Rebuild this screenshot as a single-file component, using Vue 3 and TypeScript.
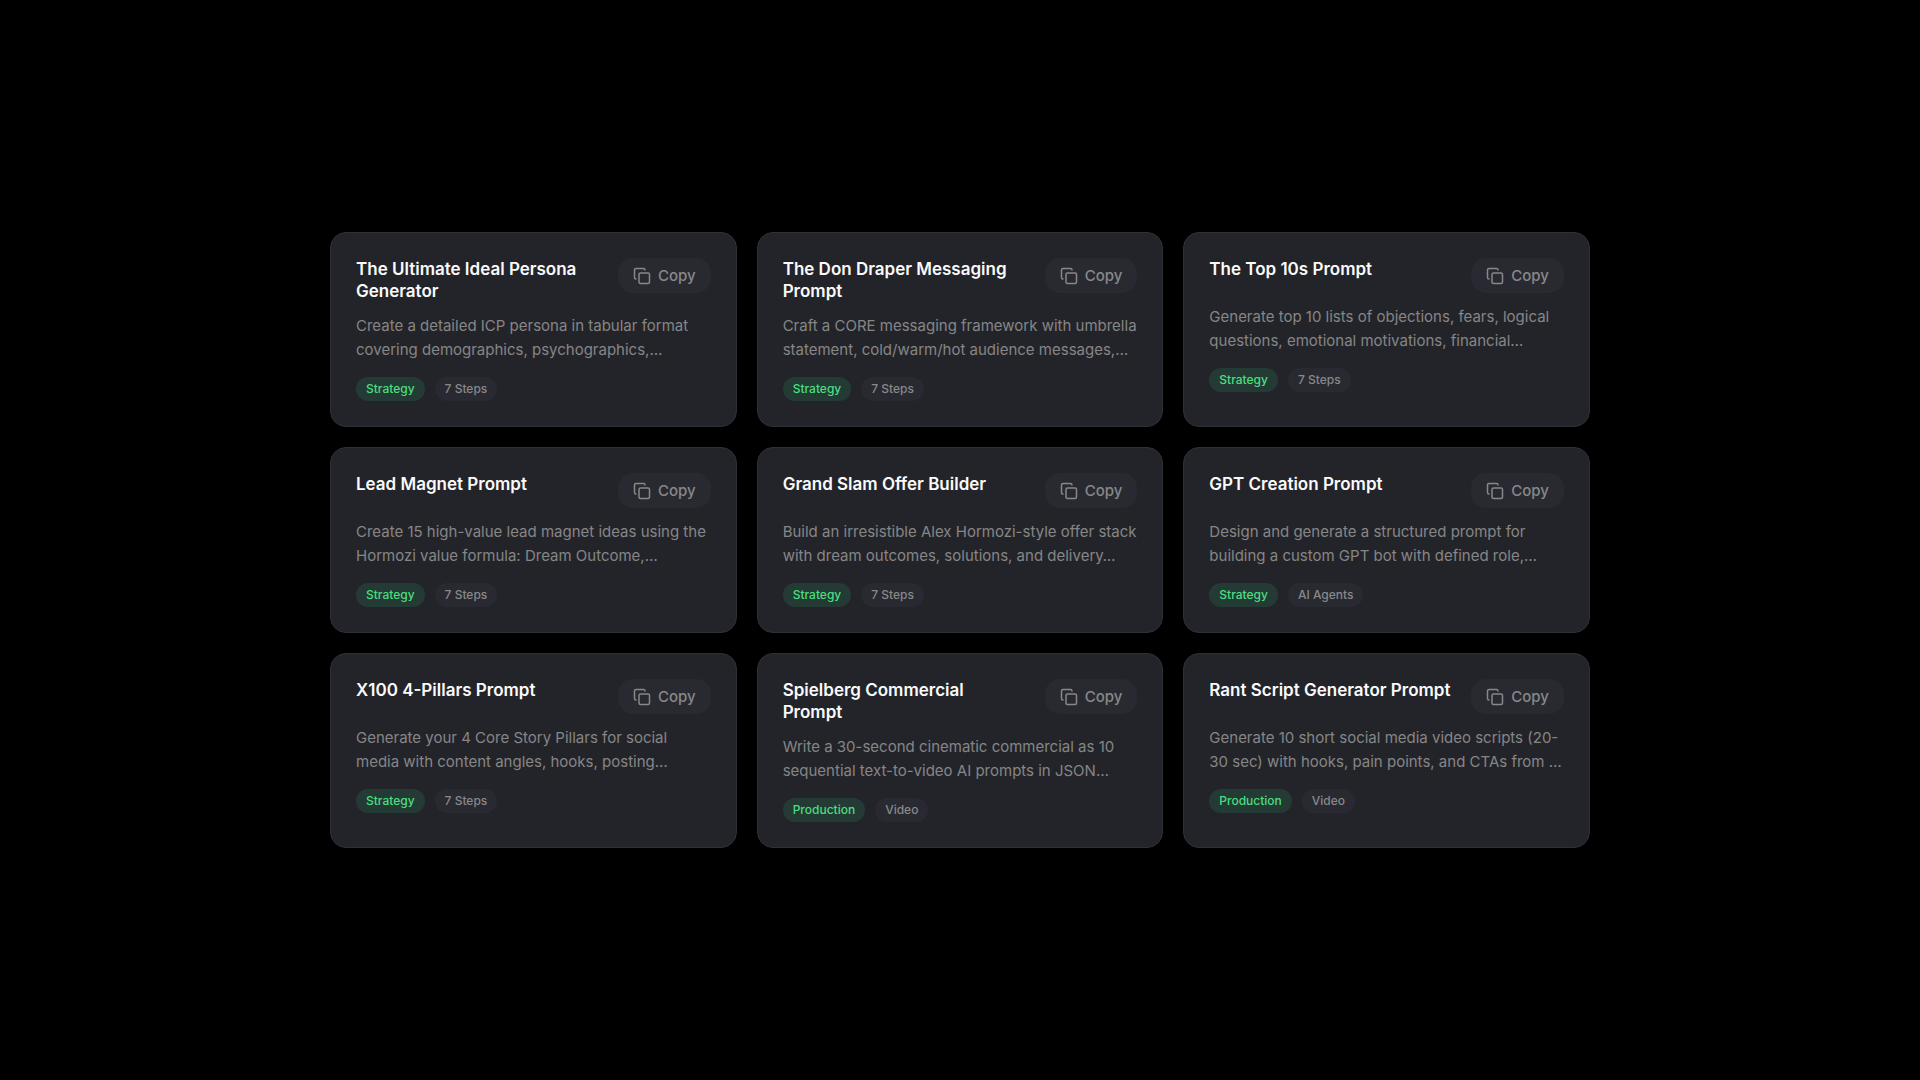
<script setup lang="ts">
interface Prompt {
  title: string
  description: string
  category: string
  tag: string
}

const prompts: Prompt[] = [
  {
    title: 'The Ultimate Ideal Persona Generator',
    description: 'Create a detailed ICP persona in tabular format covering demographics, psychographics,…',
    category: 'Strategy',
    tag: '7 Steps',
  },
  {
    title: 'The Don Draper Messaging Prompt',
    description: 'Craft a CORE messaging framework with umbrella statement, cold/warm/hot audience messages,…',
    category: 'Strategy',
    tag: '7 Steps',
  },
  {
    title: 'The Top 10s Prompt',
    description: 'Generate top 10 lists of objections, fears, logical questions, emotional motivations, financial…',
    category: 'Strategy',
    tag: '7 Steps',
  },
  {
    title: 'Lead Magnet Prompt',
    description: 'Create 15 high-value lead magnet ideas using the Hormozi value formula: Dream Outcome,…',
    category: 'Strategy',
    tag: '7 Steps',
  },
  {
    title: 'Grand Slam Offer Builder',
    description: 'Build an irresistible Alex Hormozi-style offer stack with dream outcomes, solutions, and delivery…',
    category: 'Strategy',
    tag: '7 Steps',
  },
  {
    title: 'GPT Creation Prompt',
    description: 'Design and generate a structured prompt for building a custom GPT bot with defined role,…',
    category: 'Strategy',
    tag: 'AI Agents',
  },
  {
    title: 'X100 4-Pillars Prompt',
    description: 'Generate your 4 Core Story Pillars for social media with content angles, hooks, posting…',
    category: 'Strategy',
    tag: '7 Steps',
  },
  {
    title: 'Spielberg Commercial Prompt',
    description: 'Write a 30-second cinematic commercial as 10 sequential text-to-video AI prompts in JSON…',
    category: 'Production',
    tag: 'Video',
  },
  {
    title: 'Rant Script Generator Prompt',
    description: 'Generate 10 short social media video scripts (20-30 sec) with hooks, pain points, and CTAs from …',
    category: 'Production',
    tag: 'Video',
  },
]

function copyPrompt(prompt: Prompt) {
  navigator.clipboard?.writeText(prompt.description)
}
</script>

<template>
  <main class="page">
    <div class="grid">
      <article v-for="prompt in prompts" :key="prompt.title" class="card">
        <header class="card-header">
          <h2 class="title">{{ prompt.title }}</h2>
          <button class="copy" type="button" @click="copyPrompt(prompt)">
            <svg class="copy-icon" viewBox="0 0 24 24" aria-hidden="true">
              <rect x="8" y="8" width="14" height="14" rx="2" />
              <path d="M4 16c-1.1 0-2-.9-2-2V4c0-1.1.9-2 2-2h10c1.1 0 2 .9 2 2" />
            </svg>
            Copy
          </button>
        </header>
        <p class="description">{{ prompt.description }}</p>
        <div class="tags">
          <span class="tag tag-category">{{ prompt.category }}</span>
          <span class="tag">{{ prompt.tag }}</span>
        </div>
      </article>
    </div>
  </main>
</template>

<style>
body {
  margin: 0;
  background: #000;
}
</style>

<style scoped>
.page {
  display: flex;
  align-items: center;
  justify-content: center;
  min-height: 100vh;
  font-family: Inter, 'Liberation Sans', sans-serif;
}

.grid {
  display: grid;
  grid-template-columns: repeat(3, minmax(0, 1fr));
  gap: 20px;
  width: 100%;
  max-width: 1260px;
}

.card {
  box-sizing: border-box;
  padding: 25px;
  border: 1px solid #303138;
  border-radius: 16px;
  background: #23242a;
}

.card-header {
  display: flex;
  align-items: flex-start;
  justify-content: space-between;
  gap: 19px;
  margin-bottom: 12px;
}

.title {
  margin: 0;
  color: #fafafa;
  font-size: 17px;
  font-weight: 600;
  line-height: 22px;
}

.copy {
  display: flex;
  flex-shrink: 0;
  align-items: center;
  gap: 7px;
  height: 35px;
  padding: 0 15px;
  border: 0;
  border-radius: 15px;
  background: #292a31;
  color: #888;
  font-family: inherit;
  font-size: 15px;
  font-weight: 500;
  cursor: pointer;
}

.copy-icon {
  width: 18px;
  height: 18px;
  fill: none;
  stroke: currentColor;
  stroke-width: 2;
  stroke-linecap: round;
  stroke-linejoin: round;
}

.description {
  margin: 0 0 15px;
  color: #868686;
  font-size: 15px;
  line-height: 24px;
}

.tags {
  display: flex;
  gap: 10px;
}

.tag {
  padding: 0 10px;
  border-radius: 12px;
  background: #292a31;
  color: #888;
  font-size: 12px;
  font-weight: 500;
  line-height: 24px;
}

.tag-category {
  background: #243a34;
  color: #4ade80;
}
</style>
